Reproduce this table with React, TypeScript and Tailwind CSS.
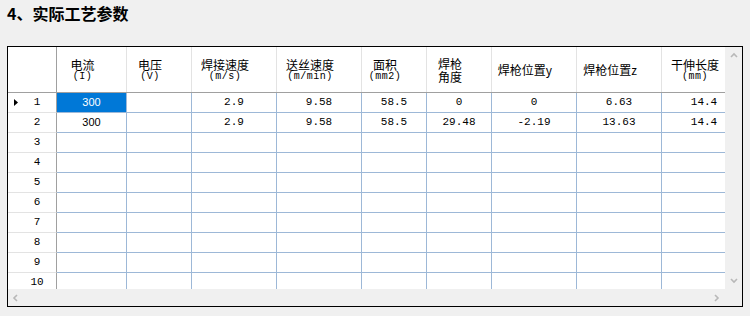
import React from 'react';

type Col = { w: string; l1: string; l2?: string; l2cjk?: boolean; sans?: boolean };

const cols: Col[] = [
  { w: 'w-[70px]', l1: '电流', l2: '(I)', sans: true },
  { w: 'w-[65px]', l1: '电压', l2: '(V)' },
  { w: 'w-[85px]', l1: '焊接速度', l2: '(m/s)' },
  { w: 'w-[85px]', l1: '送丝速度', l2: '(m/min)' },
  { w: 'w-[65px]', l1: '面积', l2: '(mm2)' },
  { w: 'w-[65px]', l1: '焊枪', l2: '角度', l2cjk: true },
  { w: 'w-[85px]', l1: '焊枪位置y' },
  { w: 'w-[85px]', l1: '焊枪位置z' },
  { w: 'w-[85px]', l1: '干伸长度', l2: '(mm)' },
];

const rows: string[][] = [
  ['300', '', '2.9', '9.58', '58.5', '0', '0', '6.63', '14.4'],
  ['300', '', '2.9', '9.58', '58.5', '29.48', '-2.19', '13.63', '14.4'],
  ...Array.from({ length: 8 }, () => Array(9).fill('')),
];

const cjk = "font-['SimSun','Noto_Sans_CJK_SC',sans-serif]";
const mono = "font-['Liberation_Mono',monospace]";

function Chevron({ dir }: { dir: 'up' | 'down' | 'left' | 'right' }) {
  const d = {
    up: 'M1 5 L4 2 L7 5',
    down: 'M1 2 L4 5 L7 2',
    left: 'M5 1 L2 4 L5 7',
    right: 'M2 1 L5 4 L2 7',
  }[dir];
  return (
    <svg width="8" height="8" viewBox="0 0 8 8">
      <path d={d} fill="none" stroke="#b8b8b8" strokeWidth="1.6" />
    </svg>
  );
}

export default function App() {
  return (
    <div className="w-[750px] h-[316px] bg-[#f0f0f0] overflow-hidden text-black">
      <div className={`pl-[7px] pt-[5px] h-[46px] text-[16px] leading-[16px] font-bold ${cjk}`}>
        4、实际工艺参数
      </div>

      <div className="ml-[7px] w-[736px] h-[261px] border border-black flex flex-col">
        <div className="flex flex-1 min-h-0">
          <div className="flex-1 min-w-0 overflow-hidden bg-white flex flex-col">
            {/* header */}
            <div className="flex w-max shrink-0 h-[46px] border-b border-[#a0a0a0]">
              <div className="w-[49px] shrink-0 border-r border-[#a0a0a0]" />
              {cols.map((c, i) => (
                <div
                  key={i}
                  className={`${c.w} shrink-0 border-r border-[#e3e3e3] flex flex-col items-center justify-center pr-[18px] text-[12px] leading-[13px]`}
                >
                  <span className={cjk}>{c.l1}</span>
                  {c.l2 && (
                    <span
                      className={
                        c.l2cjk ? cjk : `${mono} text-[10px] leading-[11px] tracking-[0.5px]`
                      }
                    >
                      {c.l2}
                    </span>
                  )}
                </div>
              ))}
            </div>

            {/* rows */}
            {rows.map((r, ri) => (
              <div key={ri} className="flex w-max shrink-0 h-[20px]">
                <div className="w-[49px] shrink-0 border-r border-b border-r-[#a0a0a0] border-b-[#e3e3e3] flex items-center pl-[6px]">
                  <span className="w-[4px] flex items-center">
                    {ri === 0 && (
                      <svg width="4" height="7" viewBox="0 0 4 7">
                        <polygon points="0,0 4,3.5 0,7" fill="#000" />
                      </svg>
                    )}
                  </span>
                  <span className={`flex-1 text-center text-[11px] ${mono}`}>{ri + 1}</span>
                </div>
                {r.map((v, ci) => {
                  const sel = ri === 0 && ci === 0;
                  return (
                    <div
                      key={ci}
                      className={`${cols[ci].w} shrink-0 border-r border-b border-[#9db8d7] flex items-center justify-center ${
                        sel ? 'bg-[#0078d7] text-white' : ''
                      } ${
                        cols[ci].sans
                          ? "font-['Liberation_Sans',sans-serif] text-[11px]"
                          : `${mono} text-[11px]`
                      }`}
                    >
                      {v}
                    </div>
                  );
                })}
              </div>
            ))}
          </div>

          {/* vertical scrollbar */}
          <div className="w-[17px] shrink-0 bg-[#f0f0f0] flex flex-col items-center justify-between pt-[5px] pb-[4px]">
            <Chevron dir="up" />
            <Chevron dir="down" />
          </div>
        </div>

        {/* horizontal scrollbar */}
        <div className="h-[17px] shrink-0 flex bg-[#f0f0f0]">
          <div className="flex-1 flex items-center justify-between pl-[4px] pr-[4px]">
            <Chevron dir="left" />
            <Chevron dir="right" />
          </div>
          <div className="w-[17px] shrink-0" />
        </div>
      </div>
    </div>
  );
}
